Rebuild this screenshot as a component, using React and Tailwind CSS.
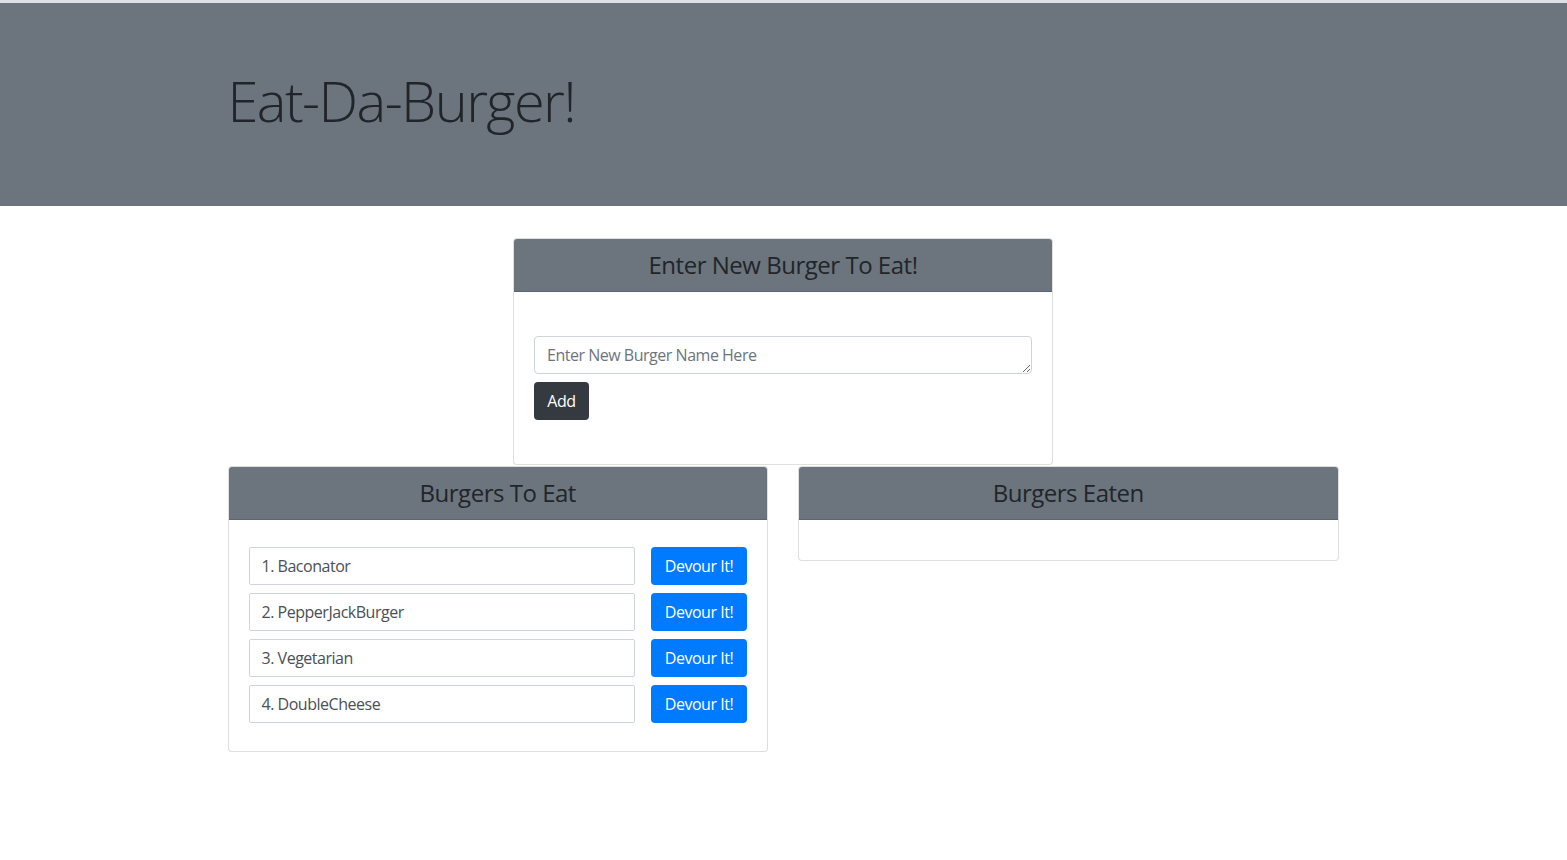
const burgers = ["Baconator", "PepperJackBurger", "Vegetarian", "DoubleCheese"];

function Card({ title, children }) {
  return (
    <div className="overflow-hidden rounded-[4px] border border-black/[.125] bg-white">
      <div className="flex h-[53px] items-center justify-center border-b border-black/[.125] bg-[#6c757d]">
        <h4 className="text-[24px] font-medium leading-[1.2] tracking-[-0.02em] text-[#212529]">{title}</h4>
      </div>
      {children}
    </div>
  );
}

export default function App() {
  return (
    <div
      className="min-h-screen bg-white text-[16px] tracking-[-0.03em] text-[#212529]"
      style={{ fontFamily: '"Open Sans", "Noto Sans", sans-serif' }}
    >
      <div className="h-[3px] bg-[#dee2e6]" />
      <div className="h-[203px] bg-[#6c757d]">
        <div className="mx-auto w-[1140px] px-[15px] pt-[64px]">
          <h1 className="-ml-px text-[56px] font-light leading-[1.2] tracking-[-0.028em] text-[#212529]">Eat-Da-Burger!</h1>
        </div>
      </div>

      <div className="mx-auto w-[1140px] px-[15px] pt-[32px]">
        <div className="-ml-px">
          <div className="mx-auto w-[540px]">
            <Card title="Enter New Burger To Eat!">
              <form className="flex flex-col items-start gap-2 px-[20px] py-[44px]" onSubmit={(e) => e.preventDefault()}>
                <textarea
                  rows={1}
                  placeholder="Enter New Burger Name Here"
                  className="block h-[38px] w-full rounded-[4px] border border-[#ced4da] px-3 py-[6px] text-[16px] leading-[1.5] text-[#495057] placeholder:text-[#6c757d] outline-none"
                />
                <button className="h-[38px] w-[55px] rounded-[4px] bg-[#343a40] text-white">Add</button>
              </form>
            </Card>
          </div>

          <div className="mt-px grid grid-cols-2 items-start gap-[30px]">
            <Card title="Burgers To Eat">
              <ul className="flex flex-col gap-2 px-[20px] pb-[28px] pt-[27px]">
                {burgers.map((b, i) => (
                  <li key={b} className="flex gap-4">
                    <div className="flex h-[38px] flex-1 items-center rounded-[2px] border border-[#ced4da] px-3 text-[#495057]">
                      {i + 1}. {b}
                    </div>
                    <button className="h-[38px] w-[96px] rounded-[4px] bg-[#007bff] text-white">Devour It!</button>
                  </li>
                ))}
              </ul>
            </Card>
            <Card title="Burgers Eaten">
              <div className="h-[40px]" />
            </Card>
          </div>
        </div>
      </div>
    </div>
  );
}
